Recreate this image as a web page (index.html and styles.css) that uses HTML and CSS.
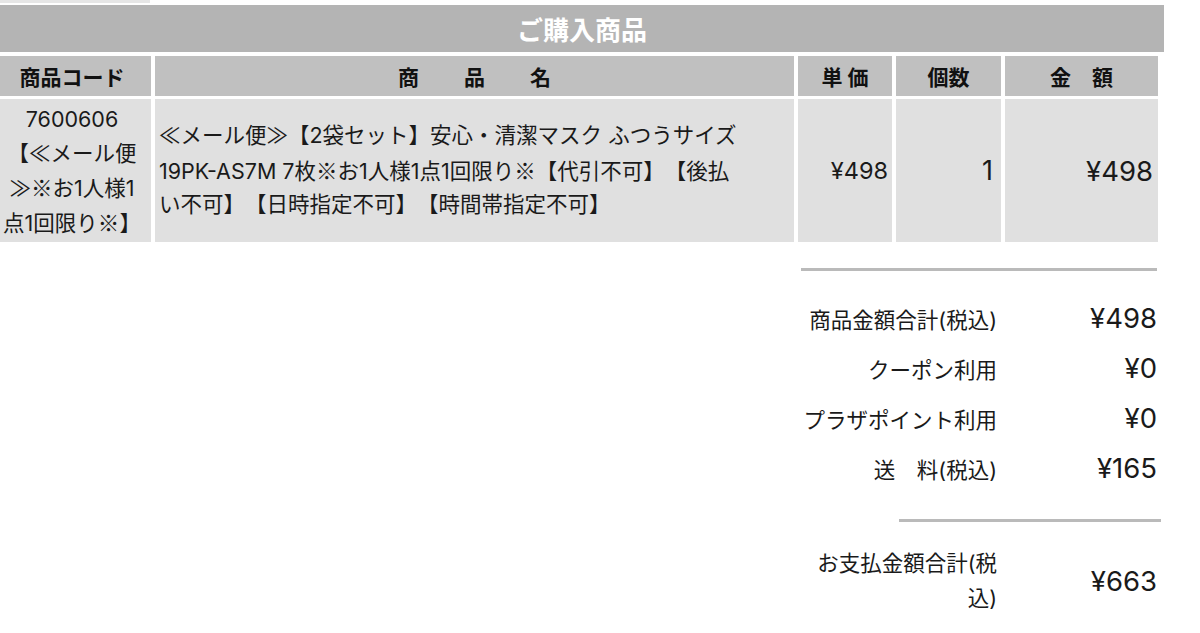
FILE: index.html
```html
<!DOCTYPE html>
<html lang="ja">
<head>
<meta charset="utf-8">
<title>ご購入商品</title>
<link rel="stylesheet" href="styles.css">
</head>
<body>
<div class="stub"></div>
<div class="title">ご購入商品</div>
<div class="items">
  <div class="hd">商品コード</div>
  <div class="hd hd-name">商　品　名</div>
  <div class="hd">単 価</div>
  <div class="hd">個数</div>
  <div class="hd">金　額</div>
  <div class="cell code"><p class="txt">7600606<br>【≪メール便<br>≫<span class="cjk">※</span>お1人様1<br>点1回限り<span class="cjk">※</span>】</p></div>
  <div class="cell name"><p class="txt">≪メール便≫【2袋セット】安心・清潔マスク ふつうサイズ<br>19PK-AS7M 7枚<span class="cjk">※</span>お1人様1点1回限り<span class="cjk">※</span>【代引不可】【後払<br>い不可】【日時指定不可】【時間帯指定不可】</p></div>
  <div class="cell num price"><p class="txt">¥498</p></div>
  <div class="cell num qty"><p class="txt">1</p></div>
  <div class="cell num total"><p class="txt">¥498</p></div>
</div>
<div class="summary">
  <div class="rule rule-1"></div>
  <div class="srow first"><span class="label">商品金額合計(税込)</span><span class="val">¥498</span></div>
  <div class="srow"><span class="label">クーポン利用</span><span class="val">¥0</span></div>
  <div class="srow"><span class="label">プラザポイント利用</span><span class="val">¥0</span></div>
  <div class="srow"><span class="label">送　料(税込)</span><span class="val">¥165</span></div>
  <div class="rule rule-2"></div>
  <div class="srow final"><span class="label">お支払金額合計(税<br>込)</span><span class="val">¥663</span></div>
</div>
</body>
</html>
```
FILE: styles.css
```css
html, body {
  margin: 0;
  padding: 0;
  background: #ffffff;
}
body {
  font-family: "Inter", "Noto Sans CJK JP", sans-serif;
  color: #1a1a1a;
  overflow: hidden;
  text-spacing-trim: space-all;
}
.cjk {
  font-family: "Noto Sans CJK JP", sans-serif;
}
.stub {
  width: 150px;
  height: 3px;
  background: #e6e6e6;
}
.title {
  margin-top: 2px;
  width: 1164px;
  height: 47px;
  line-height: 47px;
  background: #b4b4b4;
  color: #ffffff;
  font-family: "Noto Sans CJK JP", sans-serif;
  font-size: 26px;
  font-weight: 700;
  text-align: center;
}
.items {
  display: grid;
  grid-template-columns: 158px 639px 94px 105px 153px;
  column-gap: 4px;
  row-gap: 3px;
  margin-left: -7px;
  margin-top: 4px;
}
.hd {
  height: 40px;
  background: #c0c0c0;
  display: flex;
  align-items: center;
  justify-content: center;
  font-family: "Noto Sans CJK JP", sans-serif;
  font-size: 21px;
  font-weight: 700;
  color: #111;
  white-space: pre;
}
.hd-name {
  letter-spacing: 12px;
  text-indent: 12px;
}
.cell {
  background: #e0e0e0;
  font-size: 21.5px;
  line-height: 34px;
  padding: 3px 4px;
  display: flex;
  align-items: center;
  white-space: nowrap;
}
.txt {
  margin: 0;
}
.code {
  justify-content: center;
  text-align: center;
  padding: 2.5px 0;
}
.name {
  padding-left: 4px;
  line-height: 33.5px;
}
.num {
  justify-content: flex-end;
}
.price {
  font-size: 23.5px;
  padding-right: 4px;
}
.qty {
  font-size: 27px;
  padding-right: 8px;
}
.total {
  font-size: 27.5px;
  padding-right: 5px;
}
.summary {
  margin-left: 801px;
  width: 361px;
  margin-top: 26px;
}
.rule {
  height: 3px;
  background: #bababa;
}
.rule-1 {
  width: 356px;
}
.rule-2 {
  margin-left: 98px;
  width: 262px;
  margin-top: 26px;
}
.srow {
  display: grid;
  grid-template-columns: 196px 160px;
  align-items: center;
  height: 50px;
}
.srow.first {
  margin-top: 22px;
}
.label {
  text-align: right;
  font-size: 21.5px;
  white-space: nowrap;
  color: #1a1a1a;
}
.val {
  text-align: right;
  font-size: 27.5px;
  color: #1a1a1a;
}
.srow.final {
  height: 70px;
  margin-top: 24px;
}
.srow.final .label {
  line-height: 35px;
}
```
